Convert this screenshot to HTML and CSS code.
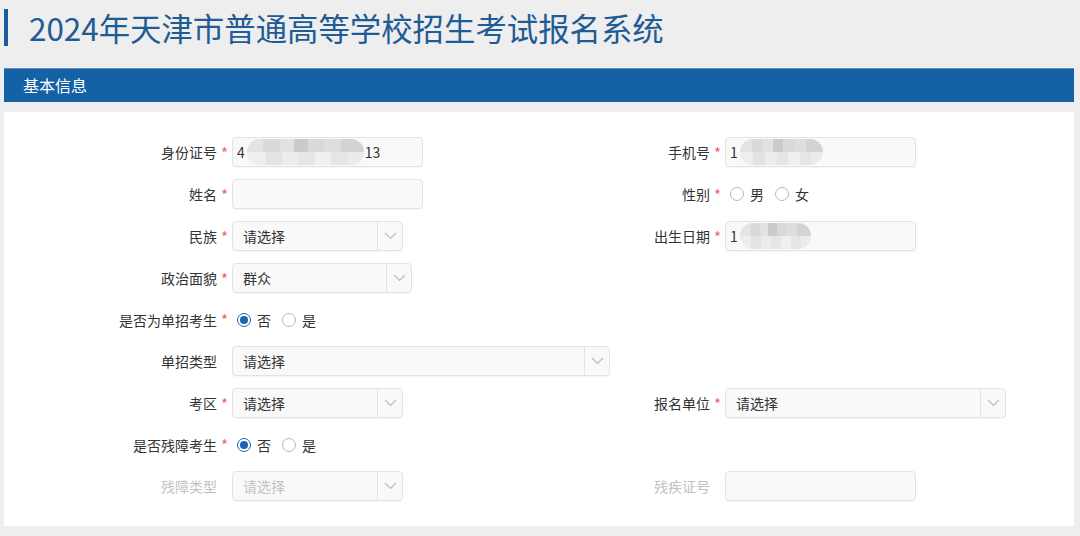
FILE: index.html
```html
<!DOCTYPE html>
<html lang="zh-CN">
<head>
<meta charset="utf-8">
<title>2024年天津市普通高等学校招生考试报名系统</title>
<link rel="stylesheet" href="styles.css">
</head>
<body>
<header class="title">
  <span class="accent"></span>
  <h1>2024年天津市普通高等学校招生考试报名系统</h1>
</header>
<div class="section-bar">基本信息</div>
<main class="panel">
  <div class="row">
    <div class="cell">
      <label class="lbl">身份证号</label><span class="star">*</span>
      <div class="input w190"><span class="val">4</span><span class="blur b117"></span><span class="val">13</span></div>
    </div>
    <div class="cell">
      <label class="lbl">手机号</label><span class="star">*</span>
      <div class="input w190"><span class="val">1</span><span class="blur b83"></span></div>
    </div>
  </div>
  <div class="row">
    <div class="cell">
      <label class="lbl">姓名</label><span class="star">*</span>
      <div class="input w190"></div>
    </div>
    <div class="cell">
      <label class="lbl">性别</label><span class="star">*</span>
      <div class="radios">
        <span class="radio"></span><span class="rtext">男</span>
        <span class="radio"></span><span class="rtext">女</span>
      </div>
    </div>
  </div>
  <div class="row">
    <div class="cell">
      <label class="lbl">民族</label><span class="star">*</span>
      <div class="select w170"><span class="stext">请选择</span><span class="arrow"><svg width="13" height="8" viewBox="0 0 13 8"><path d="M1 1 L6.5 6.5 L12 1" fill="none" stroke="#bdbdbd" stroke-width="1.2"/></svg></span></div>
    </div>
    <div class="cell">
      <label class="lbl">出生日期</label><span class="star">*</span>
      <div class="input w190"><span class="val">1</span><span class="blur b71"></span></div>
    </div>
  </div>
  <div class="row">
    <div class="cell">
      <label class="lbl">政治面貌</label><span class="star">*</span>
      <div class="select w179"><span class="stext">群众</span><span class="arrow"><svg width="13" height="8" viewBox="0 0 13 8"><path d="M1 1 L6.5 6.5 L12 1" fill="none" stroke="#bdbdbd" stroke-width="1.2"/></svg></span></div>
    </div>
  </div>
  <div class="row rrow">
    <div class="cell">
      <label class="lbl">是否为单招考生</label><span class="star">*</span>
      <div class="radios">
        <span class="radio on"></span><span class="rtext">否</span>
        <span class="radio"></span><span class="rtext">是</span>
      </div>
    </div>
  </div>
  <div class="row">
    <div class="cell">
      <label class="lbl">单招类型</label><span class="star"></span>
      <div class="select w377"><span class="stext">请选择</span><span class="arrow"><svg width="13" height="8" viewBox="0 0 13 8"><path d="M1 1 L6.5 6.5 L12 1" fill="none" stroke="#bdbdbd" stroke-width="1.2"/></svg></span></div>
    </div>
  </div>
  <div class="row">
    <div class="cell">
      <label class="lbl">考区</label><span class="star">*</span>
      <div class="select w170"><span class="stext">请选择</span><span class="arrow"><svg width="13" height="8" viewBox="0 0 13 8"><path d="M1 1 L6.5 6.5 L12 1" fill="none" stroke="#bdbdbd" stroke-width="1.2"/></svg></span></div>
    </div>
    <div class="cell">
      <label class="lbl">报名单位</label><span class="star">*</span>
      <div class="select w280"><span class="stext">请选择</span><span class="arrow"><svg width="13" height="8" viewBox="0 0 13 8"><path d="M1 1 L6.5 6.5 L12 1" fill="none" stroke="#bdbdbd" stroke-width="1.2"/></svg></span></div>
    </div>
  </div>
  <div class="row rrow">
    <div class="cell">
      <label class="lbl">是否残障考生</label><span class="star">*</span>
      <div class="radios">
        <span class="radio on"></span><span class="rtext">否</span>
        <span class="radio"></span><span class="rtext">是</span>
      </div>
    </div>
  </div>
  <div class="row">
    <div class="cell">
      <label class="lbl off">残障类型</label><span class="star"></span>
      <div class="select w170 disabled"><span class="stext">请选择</span><span class="arrow"><svg width="13" height="8" viewBox="0 0 13 8"><path d="M1 1 L6.5 6.5 L12 1" fill="none" stroke="#bdbdbd" stroke-width="1.2"/></svg></span></div>
    </div>
    <div class="cell">
      <label class="lbl off">残疾证号</label><span class="star"></span>
      <div class="input w190 disabled"></div>
    </div>
  </div>
</main>
</body>
</html>
```
FILE: styles.css
```css
* { box-sizing: border-box; }
body {
  margin: 0;
  background: #eeeeee;
  font-family: "Noto Sans CJK SC", "Noto Sans", sans-serif;
  color: #333;
}
.title {
  display: flex;
  align-items: center;
  padding: 9px 0 0 4px;
  height: 46px;
}
.accent {
  width: 4px;
  height: 37px;
  background: #1c5c98;
}
.title h1 {
  margin: 0 0 0 21px;
  font-size: 31.4px;
  font-weight: 400;
  color: #1f5b95;
  line-height: 37px;
}
.section-bar {
  margin: 22px 0 0 4px;
  width: 1070px;
  height: 34px;
  background: #1461a6;
  border-top: 1px solid #5d8fc2;
  color: #fff;
  font-size: 16px;
  line-height: 32px;
  padding-left: 19px;
}
.panel {
  margin: 10px 0 0 4px;
  width: 1070px;
  background: #fff;
  padding: 25px 0 25px 0;
  display: flex;
  flex-direction: column;
  gap: 12px;
}
.row {
  display: flex;
  height: 30px;
}
.row.rrow { height: 29px; }
.cell {
  display: flex;
  align-items: center;
  width: 493px;
  flex-shrink: 0;
}
.cell > * { flex-shrink: 0; }
.lbl {
  width: 213px;
  text-align: right;
  font-size: 14px;
  color: #333;
  white-space: nowrap;
}
.lbl.off { color: #c2c2c2; }
.star {
  width: 15px;
  padding-left: 4px;
  color: #f06464;
  font-size: 15px;
  line-height: 15px;
  height: 15px;
}
.input, .select {
  height: 30px;
  background: #f9f9f9;
  border: 1px solid #e3e3e3;
  border-radius: 4px;
  box-shadow: 0 1px 0 rgba(0,0,0,0.03);
  display: flex;
  align-items: center;
  font-size: 14px;
  color: #333;
}
.input { padding-left: 4px; }
.w190 { width: 191px; }
.w170 { width: 171px; }
.w179 { width: 180px; }
.w377 { width: 378px; }
.w280 { width: 281px; }
.val { line-height: 28px; }
.blur {
  display: inline-block;
  height: 26px;
  border-radius: 13px;
  margin: 0 1px 0 2px;
  background:
    linear-gradient(to right, #e4e4e4 0 14%, #dadada 14% 28%, #e2e2e2 28% 40%, #cbcbcb 40% 52%, #d9d9d9 52% 66%, #dedede 66% 80%, #d3d3d3 80% 100%) top / 100% 50% no-repeat,
    linear-gradient(to right, #eeeeee 0 16%, #e3e3e3 16% 30%, #ececec 30% 44%, #e6e6e6 44% 58%, #efefef 58% 72%, #e5e5e5 72% 86%, #ebebeb 86% 100%) bottom / 100% 50% no-repeat;
}
.b117 { width: 117px; }
.b83 { width: 83px; }
.b71 { width: 71px; }
.select { justify-content: space-between; }
.stext { padding-left: 10px; }
.arrow {
  width: 25px;
  height: 100%;
  border-left: 1px solid #e3e3e3;
  display: flex;
  align-items: center;
  justify-content: center;
}
.disabled .stext { color: #c2c2c2; }
.radios {
  display: flex;
  align-items: center;
  padding-left: 5px;
  font-size: 14px;
}
.radio {
  width: 14px;
  height: 14px;
  border: 1px solid #b9b9b9;
  border-radius: 50%;
  background: #fff;
  margin-right: 6px;
  display: flex;
  align-items: center;
  justify-content: center;
}
.radio.on { border-color: #1a64b0; }
.radio.on::after {
  content: "";
  width: 8px;
  height: 8px;
  border-radius: 50%;
  background: #1a64b0;
}
.rtext { margin-right: 11px; color: #333; }
```
